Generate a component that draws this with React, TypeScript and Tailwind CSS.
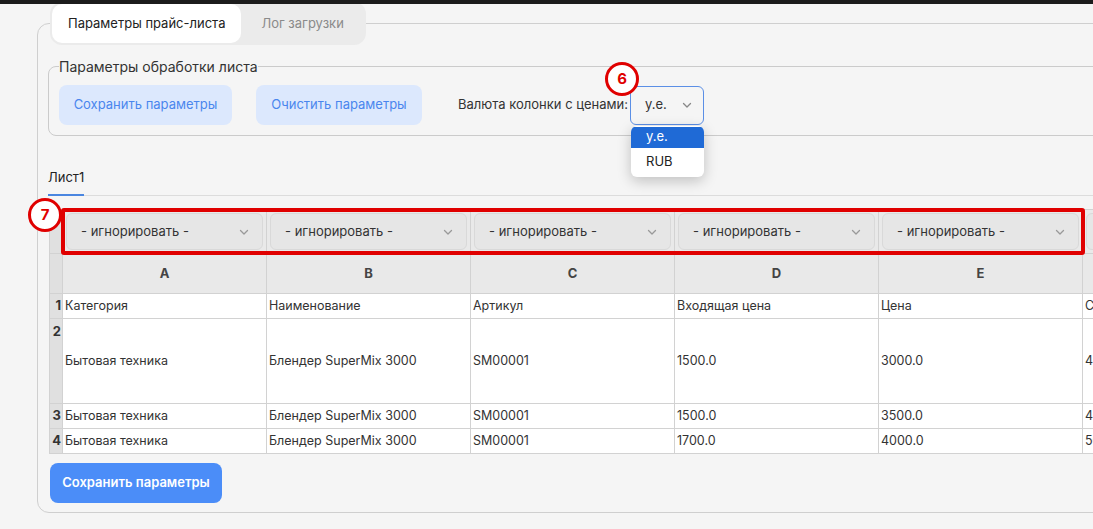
import React from "react";

const cols = ["A", "B", "C", "D", "E", "F"];
const rows: { n: number; tall?: boolean; cells: string[] }[] = [
  { n: 1, cells: ["Категория", "Наименование", "Артикул", "Входящая цена", "Цена", "Скидка"] },
  { n: 2, tall: true, cells: ["Бытовая техника", "Блендер SuperMix 3000", "SM00001", "1500.0", "3000.0", "45"] },
  { n: 3, cells: ["Бытовая техника", "Блендер SuperMix 3000", "SM00001", "1500.0", "3500.0", "40"] },
  { n: 4, cells: ["Бытовая техника", "Блендер SuperMix 3000", "SM00001", "1700.0", "4000.0", "50"] },
];

function Chevron({ className = "" }: { className?: string }) {
  return (
    <svg width="12" height="12" viewBox="0 0 12 12" className={className} fill="none">
      <path d="M2.5 4.5 6 8l3.5-3.5" stroke="currentColor" strokeWidth="1.3" strokeLinecap="round" strokeLinejoin="round" />
    </svg>
  );
}

export default function App() {
  return (
    <div className="relative min-h-[529px] overflow-hidden bg-[#f5f5f5] font-['Inter','Noto_Sans',sans-serif] text-[#333]">
      <div className="absolute inset-x-0 top-0 z-30 h-1 bg-[#1c1c1c]" />

      <div className="pl-[37px] pt-[23px]">
        <div className="h-[490px] w-[1200px] rounded-[12px] border border-[#cfcfcf] pl-[10px]">
          {/* tabs */}
          <div className="-mt-[22px] ml-[2px] flex w-fit rounded-[12px] bg-[#ebebeb] p-[2px]">
            <div className="flex h-[39px] items-center whitespace-nowrap rounded-[10px] bg-white px-[16px] text-[13px] text-[#222]">
              Параметры прайс-листа
            </div>
            <div className="flex h-[39px] items-center whitespace-nowrap px-[20px] text-[13px] text-[#8a8a8a]">
              Лог загрузки
            </div>
          </div>

          {/* fieldset */}
          <fieldset className="mt-[13px] w-[1200px] rounded-[8px] border border-[#cbcbcb] pb-[10px] pl-[10px]">
            <legend className="px-0 text-[14px] leading-[17px] text-[#333]">Параметры обработки листа</legend>
            <div className="mt-[10px] flex items-center">
              <button className="h-[40px] w-[173px] whitespace-nowrap rounded-[8px] bg-[#dce8fd] text-[13px] text-[#4a86ee]">
                Сохранить параметры
              </button>
              <button className="ml-[24px] h-[40px] w-[166px] whitespace-nowrap rounded-[8px] bg-[#dce8fd] text-[13px] text-[#4a86ee]">
                Очистить параметры
              </button>
              <span className="ml-[36px] whitespace-nowrap text-[13px] text-[#333]">Валюта колонки с ценами:</span>
              <div className="relative ml-[2px]">
                <div className="flex h-[39px] w-[74px] items-center justify-between rounded-[6px] border border-[#5b8fe6] pl-[14px] pr-[10px] text-[13px] text-[#333]">
                  <span>у.е.</span>
                  <Chevron className="text-[#888]" />
                </div>
                <div className="absolute left-[1px] top-[40px] z-20 w-[73px] overflow-hidden rounded-[6px] bg-white py-[1px] text-[13px] shadow-[0_4px_14px_rgba(0,0,0,0.22)]">
                  <div className="flex h-[21px] items-center bg-[#1f6ad6] pl-[15px] text-white">у.е.</div>
                  <div className="flex h-[28px] items-center pl-[15px] text-[#222]">RUB</div>
                </div>
              </div>
            </div>
          </fieldset>

          {/* sheet tab */}
          <div className="mt-[32px] flex w-[1200px] border-b border-[#dcdcdc]">
            <div className="-mb-px border-b-2 border-[#4a86e0] pb-[8px] text-[13px] leading-[18px] text-[#222]">Лист1</div>
          </div>

          {/* table */}
          <div className="ml-[1px] mt-[13px] w-[1237px]">
            <table className="w-[1237px] table-fixed border-collapse text-[12.5px] text-[#333]">
              <colgroup>
                <col className="w-[13px]" />
                {cols.map((c) => (
                  <col key={c} className="w-[204px]" />
                ))}
              </colgroup>
              <tbody>
                <tr className="h-[44px] bg-[#e9e9e9]">
                  <td className="border border-[#d2d2d2] bg-[#e0e0e0] p-0" />
                  {cols.map((c) => (
                    <td key={c} className="border border-[#d2d2d2] px-[3px] py-0">
                      <div className="flex h-[37px] items-center justify-between rounded-[6px] border border-[#d9d9d9] bg-[#e6e6e6] pl-[14px] pr-[12px] text-[13px] text-[#333]">
                        <span className="whitespace-nowrap">- игнорировать -</span>
                        <Chevron className="text-[#999]" />
                      </div>
                    </td>
                  ))}
                </tr>
                <tr className="h-[40px] bg-[#e9e9e9]">
                  <td className="border border-[#d2d2d2] bg-[#e0e0e0] p-0" />
                  {cols.map((c) => (
                    <td key={c} className="border border-[#d2d2d2] p-0 text-center text-[13px] font-bold text-[#444]">
                      {c}
                    </td>
                  ))}
                </tr>
                {rows.map((r) => (
                  <tr key={r.n} className={r.tall ? "h-[85px]" : "h-[25px]"}>
                    <td
                      className={`border border-[#d2d2d2] bg-[#e0e0e0] p-0 pr-[1px] text-right text-[13px] font-bold text-[#333] ${
                        r.tall ? "pt-[3px] align-top" : ""
                      }`}
                    >
                      {r.n}
                    </td>
                    {r.cells.map((c, i) => (
                      <td key={i} className="overflow-hidden whitespace-nowrap border border-[#d2d2d2] bg-white py-0 pl-[2px]">
                        {c}
                      </td>
                    ))}
                  </tr>
                ))}
              </tbody>
            </table>
          </div>

          <button className="ml-[2px] mt-[9px] h-[40px] w-[172px] whitespace-nowrap rounded-[8px] bg-[#4b8df8] text-[13px] font-semibold text-white">
            Сохранить параметры
          </button>
        </div>
      </div>

      {/* annotations */}
      <div className="absolute left-[61px] top-[208px] z-10 h-[47px] w-[1024px] rounded-[3px] border-[4px] border-[#e00000]" />
      <div className="absolute left-[28px] top-[198px] z-10 flex h-[34px] w-[34px] items-center justify-center rounded-full border-[3px] border-[#e00000] bg-white text-[15px] font-bold text-[#e00000]">
        7
      </div>
      <div className="absolute left-[605px] top-[62px] z-10 flex h-[34px] w-[34px] items-center justify-center rounded-full border-[3px] border-[#e00000] bg-white text-[15px] font-bold text-[#e00000]">
        6
      </div>
    </div>
  );
}
